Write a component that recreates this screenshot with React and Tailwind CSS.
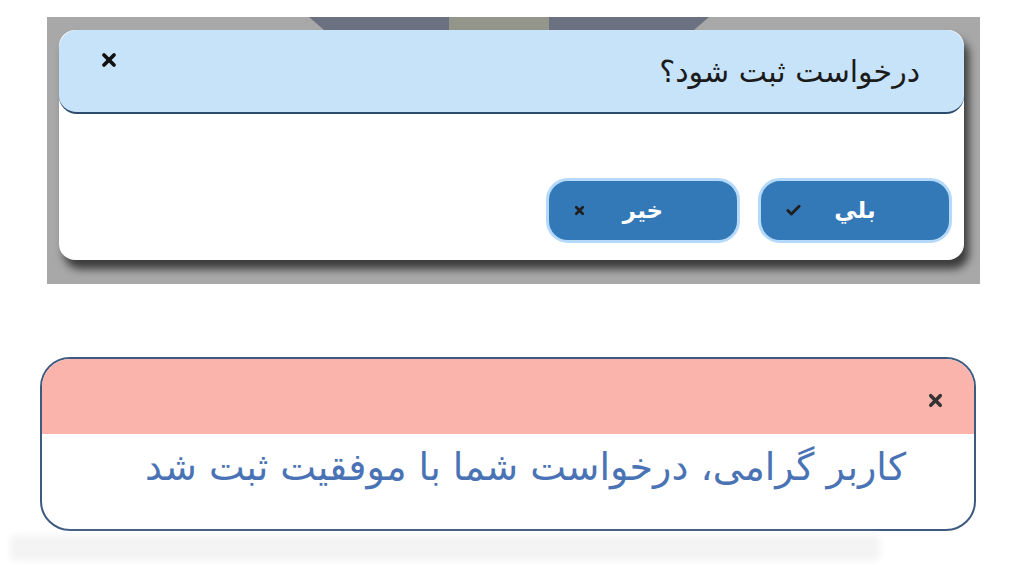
import { Check, X } from 'lucide-react';

const font = { fontFamily: '"DejaVu Sans", Tahoma, sans-serif' };

const DialogButton = ({ label, icon }) => (
  <button
    className="grid h-[65px] w-[194px] grid-cols-[1fr_auto_1fr] items-center rounded-[22px] border-[3px] border-[#b4d9fa] bg-[#3479b7] px-[24px] text-[23px] font-bold text-white"
    dir="ltr"
  >
    <span className="justify-self-start text-[#1f1f1f]">{icon}</span>
    <span dir="rtl" className="leading-none">{label}</span>
    <span />
  </button>
);

const App = () => {
  return (
    <div className="min-h-[565px] w-[1024px] overflow-hidden bg-white" style={font}>
      {/* Confirm dialog over dimmed page */}
      <div className="relative ml-[47px] mt-[17px] h-[267px] w-[933px] bg-[#a8a8a8] pl-[12px] pt-[13px]">
        <svg className="absolute left-[262px] top-0" width="400" height="13" viewBox="0 0 400 13">
          <polygon points="0,0 400,0 385,13 15,13" fill="#6c7182" />
          <rect x="140" y="0" width="100" height="13" fill="#94968c" />
        </svg>
        <div className="relative flex h-[230px] w-[905px] flex-col rounded-[16px] bg-white shadow-[5px_9px_9px_rgba(0,0,0,0.65)]">
          <div className="flex h-[84px] items-center justify-between rounded-[18px] border-b-2 border-[#2b4a6d] bg-[#c7e3f9] pl-[40px] pr-[44px]" dir="ltr">
            <X size={20} strokeWidth={4.5} className="mb-[22px] text-[#111]" />
            <span dir="rtl" className="text-[30px] text-[#1b1b1b]">درخواست ثبت شود؟</span>
          </div>
          <div className="mt-auto flex justify-end gap-[18px] pb-[17px] pr-[12px]" dir="ltr">
            <DialogButton label="خير" icon={<X size={13} strokeWidth={5} />} />
            <DialogButton label="بلي" icon={<Check size={17} strokeWidth={4} />} />
          </div>
        </div>
      </div>

      {/* Success alert */}
      <div className="ml-[40px] mt-[73px] h-[174px] w-[936px] overflow-hidden rounded-[30px] border-2 border-[#3d5a80] bg-white" dir="rtl">
        <div className="flex h-[75px] items-end bg-[#fbb4ab] pb-[24px] pr-[29px]">
          <X size={19} strokeWidth={4.5} className="text-[#333]" />
        </div>
        <div className="pr-[68px] pt-[5px] text-[38px] text-[#4a73b5]">
          کاربر گرامی، درخواست شما با موفقیت ثبت شد
        </div>
      </div>
      <div className="ml-[10px] mt-[4px] h-[26px] w-[870px] rounded-[6px] bg-[#f4f4f4] blur-[3px]" />
    </div>
  );
};

export default App;
